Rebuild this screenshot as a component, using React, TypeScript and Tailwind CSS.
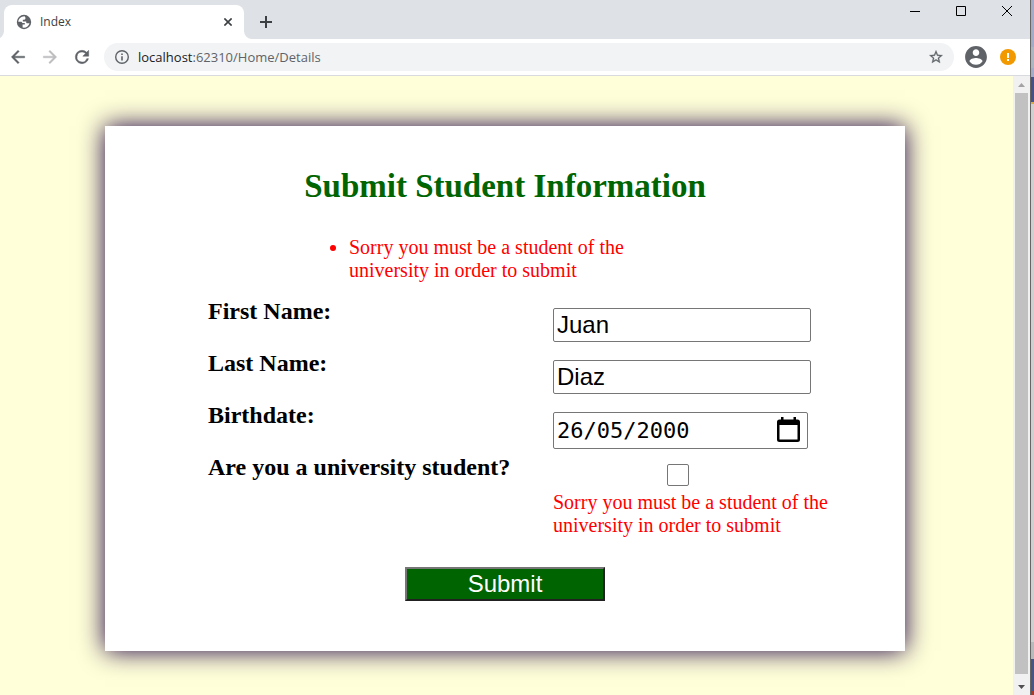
import type { ReactNode } from "react";

function Globe() {
  return (
    <svg className="h-4 w-4" viewBox="0 0 16 16" aria-hidden="true">
      <circle cx="8" cy="8" r="7.2" fill="#5f6368" />
      <path
        d="M8.600 2.200C5 2.400 2.400 4.800 2.300 7.800h3.200l1 1.200h2.300v1.600H6.600v3c3.200.6 6.200-1.400 6.900-4.400h-2.300c-.6 0-1-.4-1-1V7.400H6.800V5.800h1.400c.8 0 1.200-.5 1.200-1.200V3.400Z"
        fill="#fff"
      />
    </svg>
  );
}

function IconButton({ label, children }: { label: string; children: ReactNode }) {
  return (
    <button type="button" aria-label={label} className="flex h-6 w-6 shrink-0 items-center justify-center">
      {children}
    </button>
  );
}

function TitleBar() {
  return (
    <div className="flex h-[39px] items-start bg-[#dee1e6]">
      <div className="relative ml-1 mt-[5px] flex h-[34px] w-60 items-center rounded-t-lg bg-white pl-3 pr-1">
        <Globe />
        <span className="ml-2 flex-1 font-['Open_Sans',sans-serif] text-[12px] leading-4 text-[#3c4043]">Index</span>
        <IconButton label="Close tab">
          <svg className="h-2 w-2" viewBox="0 0 8 8" stroke="#3c4043" strokeWidth="1.6" aria-hidden="true">
            <path d="M.4.4l7.200 7.200M7.600.4L.4 7.600" />
          </svg>
        </IconButton>
        <svg className="absolute -right-2 bottom-0 h-2 w-2" viewBox="0 0 8 8" aria-hidden="true">
          <path d="M0 0v8h8A8 8 0 0 1 0 0Z" fill="#fff" />
        </svg>
        <svg className="absolute -left-1 bottom-0 h-2 w-1" viewBox="4 0 4 8" aria-hidden="true">
          <path d="M8 0v8H0A8 8 0 0 0 8 0Z" fill="#fff" />
        </svg>
      </div>
      <div className="ml-[10px] mt-[10px] flex">
        <IconButton label="New tab">
          <svg className="h-3 w-3" viewBox="0 0 12 12" stroke="#3c4043" strokeWidth="2" aria-hidden="true">
            <path d="M6 0v12M0 6h12" />
          </svg>
        </IconButton>
      </div>
      <div className="ml-auto flex">
        <button type="button" aria-label="Minimize" className="flex h-[22px] w-[46px] items-center justify-center">
          <svg className="h-[10px] w-[10px]" viewBox="0 0 10 10" aria-hidden="true">
            <path d="M0 5h10v1H0z" fill="#000" />
          </svg>
        </button>
        <button type="button" aria-label="Maximize" className="flex h-[22px] w-[46px] items-center justify-center">
          <svg className="h-[10px] w-[10px]" viewBox="0 0 10 10" aria-hidden="true">
            <path d="M.5.5h9v9h-9z" fill="none" stroke="#000" />
          </svg>
        </button>
        <button type="button" aria-label="Close" className="flex h-[22px] w-[46px] items-center justify-center">
          <svg className="h-[10px] w-[10px]" viewBox="0 0 10 10" aria-hidden="true">
            <path d="M0 0l10 10M10 0L0 10" stroke="#000" />
          </svg>
        </button>
      </div>
    </div>
  );
}

function Toolbar() {
  return (
    <div className="flex h-[37px] items-center border-b border-[#d8dade] bg-white pl-[6px] pr-[10px]">
      <div className="flex gap-2">
        <IconButton label="Back">
          <svg className="h-5 w-5" viewBox="0 0 24 24" fill="#5f6368" stroke="#5f6368" strokeWidth=".5" aria-hidden="true">
            <path d="M20 11H7.830l5.590-5.590L12 4l-8 8 8 8 1.410-1.410L7.830 13H20z" />
          </svg>
        </IconButton>
        <IconButton label="Forward">
          <svg className="h-5 w-5" viewBox="0 0 24 24" fill="#bdbdbf" stroke="#bdbdbf" strokeWidth=".5" aria-hidden="true">
            <path d="M12 4l-1.410 1.410L16.170 11H4v2h12.170l-5.580 5.590L12 20l8-8z" />
          </svg>
        </IconButton>
        <IconButton label="Reload">
          <svg className="h-5 w-5" viewBox="0 0 24 24" fill="#5f6368" stroke="#5f6368" strokeWidth=".6" aria-hidden="true">
            <path d="M17.650 6.350A7.958 7.958 0 0 0 12 4a8 8 0 1 0 7.730 10h-2.080A6 6 0 1 1 12 6c1.660 0 3.140.69 4.220 1.780L13 11h7V4z" />
          </svg>
        </IconButton>
      </div>
      <div className="ml-[10px] flex h-7 flex-1 items-center rounded-full bg-[#f1f3f4] pl-[10px] pr-[6px]">
        <svg className="h-4 w-4 shrink-0" viewBox="0 0 16 16" aria-hidden="true">
          <circle cx="8" cy="8" r="6.300" fill="none" stroke="#5f6368" strokeWidth="1.400" />
          <path d="M7.200 7.200h1.600V11.500H7.200zM7.200 4.500h1.600v1.600H7.200z" fill="#5f6368" />
        </svg>
        <span className="ml-2 flex-1 font-['Open_Sans',sans-serif] text-[13px] leading-5 text-[#5f6368]">
          <span className="text-[#202124]">localhost</span>:62310/Home/Details
        </span>
        <IconButton label="Bookmark this page">
          <svg className="h-4 w-4" viewBox="0 0 24 24" fill="#5f6368" stroke="#5f6368" strokeWidth=".4" aria-hidden="true">
            <path d="M22 9.240l-7.190-.62L12 2 9.190 8.630 2 9.240l5.460 4.730L5.820 21 12 17.270 18.180 21l-1.630-7.030L22 9.240zM12 15.400l-3.760 2.270 1-4.280-3.320-2.880 4.380-.38L12 6.100l1.710 4.040 4.380.38-3.320 2.880 1 4.280L12 15.400z" />
          </svg>
        </IconButton>
      </div>
      <div className="ml-[10px] flex gap-2">
        <IconButton label="Profile">
          <svg className="h-6 w-6" viewBox="1 1 22 22" fill="#5f6368" aria-hidden="true">
            <path d="M12 2C6.480 2 2 6.480 2 12s4.480 10 10 10 10-4.480 10-10S17.520 2 12 2zm0 3c1.660 0 3 1.340 3 3s-1.340 3-3 3-3-1.340-3-3 1.340-3 3-3zm0 14.200a7.200 7.200 0 0 1-6-3.220c.03-1.990 4-3.080 6-3.080 1.990 0 5.970 1.090 6 3.080a7.200 7.200 0 0 1-6 3.220z" />
          </svg>
        </IconButton>
        <IconButton label="Update available">
          <svg className="h-4 w-4" viewBox="0 0 16 16" aria-hidden="true">
            <circle cx="8" cy="8" r="8" fill="#f29900" />
            <path d="M7 4h2v5H7zM7 10h2v2H7z" fill="#fff" />
          </svg>
        </IconButton>
      </div>
    </div>
  );
}

function Row({ id, label, children }: { id: string; label: string; children: ReactNode }) {
  return (
    <div className="flex min-h-[52px] items-start">
      <label htmlFor={id} className="w-[345px] shrink-0 text-[24px] font-bold leading-[26px] text-black">
        {label}
      </label>
      <div className="mt-[10px] w-[288px]">{children}</div>
    </div>
  );
}

const fieldClass =
  "block h-[34px] w-[258px] rounded-xs border border-[#767676] bg-white px-[3px] font-['Liberation_Sans',Arial,sans-serif] text-[24px] leading-7 text-black";

function StudentForm() {
  return (
    <form
      onSubmit={(e) => e.preventDefault()}
      className="w-full max-w-[800px] bg-white pb-[50px] pt-[42px] font-['Liberation_Serif','Times_New_Roman',serif] shadow-[0_0_24px_#200045]"
    >
      <h1 className="text-center text-[33px] font-bold leading-9 text-[#006400]">Submit Student Information</h1>
      <ul className="mx-auto mt-8 w-[312px] list-outside list-disc text-[20px] leading-[23px] text-[#ff0000]">
        <li>Sorry you must be a student of the university in order to submit</li>
      </ul>
      <div className="mt-4 pl-[103px]">
        <Row id="first" label="First Name:">
          <input id="first" type="text" defaultValue="Juan" className={fieldClass} />
        </Row>
        <Row id="last" label="Last Name:">
          <input id="last" type="text" defaultValue="Diaz" className={fieldClass} />
        </Row>
        <Row id="birth" label="Birthdate:">
          <div className="-mb-3 flex h-[37px] w-[255px] items-center rounded-xs border border-[#767676] bg-white pl-[3px] pr-[7px]">
            <input
              id="birth"
              type="text"
              defaultValue="26/05/2000"
              className="min-w-0 flex-1 bg-transparent font-['DejaVu_Sans_Mono',monospace] text-[22px] leading-7 text-black"
            />
            <button type="button" aria-label="Open calendar" className="pb-[2px]">
              <svg className="h-[25px] w-[23px]" viewBox="0 0 23 25" aria-hidden="true">
                <path
                  d="M4 0h2.500v2.400h10V0H19v2.400h1.500A2.500 2.500 0 0 1 23 4.900v17.600a2.500 2.500 0 0 1-2.500 2.500h-18A2.500 2.500 0 0 1 0 22.500V4.900A2.500 2.500 0 0 1 2.500 2.400H4ZM2.500 8v14.500h18V8Z"
                  fill="#000"
                />
              </svg>
            </button>
          </div>
        </Row>
        <Row id="student" label="Are you a university student?">
          <div className="flex w-[250px] justify-center">
            <input
              id="student"
              type="checkbox"
              className="h-[22px] w-[22px] appearance-none rounded-xs border border-[#767676] bg-white checked:bg-[#0075ff]"
            />
          </div>
          <p className="mt-[5px] text-[20px] leading-[23px] text-[#ff0000]">
            Sorry you must be a student of the university in order to submit
          </p>
        </Row>
      </div>
      <button
        type="submit"
        className="mx-auto mt-[30px] block h-[34px] w-[200px] border-2 border-b-[#212121] border-l-[#767676] border-r-[#212121] border-t-[#767676] bg-[#006400] font-['Liberation_Sans',Arial,sans-serif] text-[24px] leading-[30px] text-white"
      >
        Submit
      </button>
    </form>
  );
}

function Scrollbar() {
  return (
    <div className="flex w-[17px] shrink-0 flex-col items-center bg-[#f1f1f1]" aria-hidden="true">
      <div className="flex h-[17px] items-center">
        <svg className="h-1 w-[7px]" viewBox="0 0 7 4">
          <path d="M3.500 0 7 4H0Z" fill="#a3a3a3" />
        </svg>
      </div>
      <div className="w-[13px] flex-1 bg-[#c1c1c1]" />
      <div className="flex h-[21px] items-end pb-[6px]">
        <svg className="h-1 w-[7px]" viewBox="0 0 7 4">
          <path d="M3.500 4 0 0h7Z" fill="#505050" />
        </svg>
      </div>
    </div>
  );
}

function WindowBehind() {
  return (
    <div className="flex w-1 shrink-0 flex-col border-l border-[#666666]" aria-hidden="true">
      <div className="h-[47px] bg-[#a3abc9]" />
      <div className="h-[21px] bg-[#adb5c2]" />
      <div className="h-[9px] bg-[#a3abc9]" />
      <div className="h-[25px] bg-[#455288]" />
      <div className="h-[2px] bg-[#d6a94c]" />
      <div className="flex-1 bg-[#d0d0d0]" />
      <div className="h-[17px] bg-[#b9b9bb]" />
      <div className="h-8 bg-[#475586]" />
      <div className="h-1 bg-[#a33a2c]" />
    </div>
  );
}

export default function App() {
  return (
    <div className="flex min-h-screen">
      <div className="flex min-w-0 flex-1 flex-col">
        <TitleBar />
        <Toolbar />
        <div className="flex flex-1">
          <main className="flex min-w-0 flex-1 items-start justify-center overflow-hidden bg-[#ffffd9] pb-11 pr-[3px] pt-[50px]">
            <StudentForm />
          </main>
          <Scrollbar />
        </div>
      </div>
      <WindowBehind />
    </div>
  );
}
